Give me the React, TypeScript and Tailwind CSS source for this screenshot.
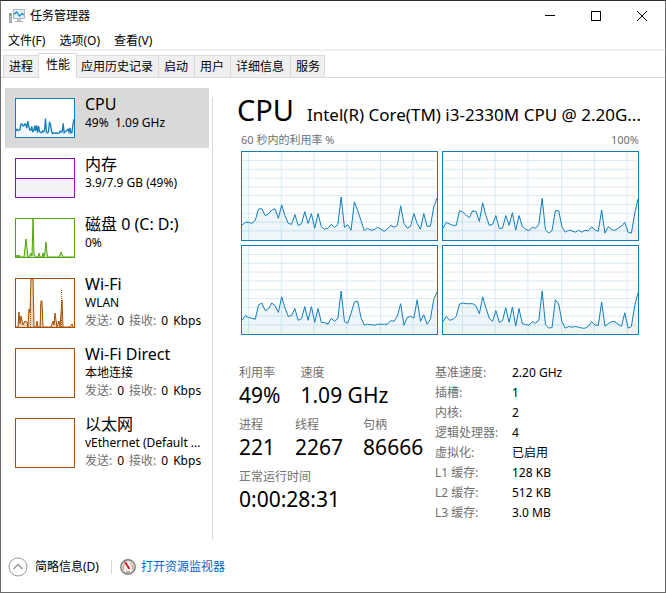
import React from 'react';

// One sample per second, 0..270 for each logical processor
const CORES: number[][] = [
  [46, 54, 54, 51, 60, 95, 96, 75, 80, 92, 96, 66, 108, 75, 51, 48, 78, 45, 50, 87, 51, 81, 36, 81, 41, 33, 36, 48, 39, 48, 132, 39, 47, 30, 117, 91, 60, 29, 36, 30, 32, 39, 33, 27, 34, 45, 39, 45, 105, 51, 36, 42, 81, 51, 33, 81, 42, 42, 101, 128],
  [36, 54, 49, 45, 45, 90, 86, 76, 69, 90, 87, 57, 114, 75, 45, 48, 75, 36, 36, 75, 45, 84, 30, 75, 42, 33, 29, 39, 36, 48, 128, 32, 21, 29, 90, 90, 41, 24, 30, 28, 24, 30, 24, 30, 28, 41, 30, 27, 92, 21, 41, 32, 30, 36, 43, 54, 24, 21, 81, 126],
  [42, 56, 51, 48, 45, 89, 95, 72, 77, 95, 87, 66, 114, 80, 54, 57, 78, 42, 47, 84, 42, 84, 36, 78, 36, 35, 30, 48, 39, 48, 132, 38, 33, 64, 98, 101, 50, 27, 30, 29, 27, 30, 30, 30, 30, 41, 39, 55, 93, 27, 51, 54, 49, 105, 39, 59, 30, 45, 106, 129],
  [38, 54, 42, 45, 54, 92, 95, 93, 93, 93, 86, 62, 114, 80, 48, 39, 72, 36, 41, 81, 36, 83, 24, 78, 32, 29, 27, 38, 33, 42, 132, 29, 18, 20, 105, 92, 38, 18, 23, 21, 23, 21, 18, 18, 24, 38, 27, 27, 98, 24, 32, 38, 38, 30, 24, 65, 18, 23, 87, 126],
];

const GRID_X = [
  [21, 120, 219, 318, 420, 519],
  [60, 159, 258, 360, 459, 558],
];
const GRID_Y = [27, 54, 81, 108, 135, 162, 189, 216, 243];

const toPoints = (samples: number[]) => samples.map((v, i) => `${i * 10},${270 - v}`).join(' ');

const CoreChart: React.FC<{ samples: number[]; gridX: number[] }> = ({ samples, gridX }) => {
  const points = toPoints(samples);
  return (
    <div className="h-[90px] border border-[#117dbb] bg-white">
      <svg className="block h-full w-full" viewBox="0 0 590 270" preserveAspectRatio="none">
        <g stroke="#d9eaf4" strokeWidth="3">
          {GRID_Y.map((y) => <line key={y} x1="0" y1={y - 1} x2="584" y2={y - 1} />)}
          {gridX.map((x) => <line key={x} x1={x - 1} y1="0" x2={x - 1} y2="270" />)}
        </g>
        <polygon points={`0,270 ${points} 590,270`} fill="#117dbb" fillOpacity="0.07" />
        <polyline points={points} fill="none" stroke="#117dbb" strokeWidth="1" vectorEffect="non-scaling-stroke" />
      </svg>
    </div>
  );
};

const CpuThumb = () => {
  const total = CORES[0].map((_, i) => CORES.reduce((sum, core) => sum + core[i], 0) / CORES.length);
  const points = toPoints(total);
  return (
    <svg className="block h-full w-full" viewBox="0 0 590 270" preserveAspectRatio="none">
      <polygon points={`0,270 ${points} 590,270`} fill="#f1f6fa" />
      <polyline points={points} fill="none" stroke="#117dbb" strokeWidth="1.3" vectorEffect="non-scaling-stroke" />
    </svg>
  );
};

const MemoryThumb = () => (
  <svg className="block h-full w-full" viewBox="0 0 58 38">
    <rect x="0" y="20" width="58" height="18" fill="#f4f2f4" />
    <line x1="0" y1="19.5" x2="58" y2="19.5" stroke="#8b12ae" />
  </svg>
);

const DiskThumb = () => (
  <svg className="block h-full w-full" viewBox="0 0 58 38">
    <polyline
      points="0,38 1,36 2,38 3,36 4,38 8,38 10,20 12,38 13,38 15,34 16,37 17,0 18,35 20,38 22,38 23,34 24,38 26,38 27,34 28,38 29,32 30,23 31,35 32,38 43,38 45,33 47,38 58,38"
      fill="#4da60c"
      fillOpacity="0.3"
      stroke="#4da60c"
    />
  </svg>
);

const WifiThumb = () => (
  <svg className="block h-full w-full" viewBox="0 0 58 48">
    <polyline
      points="0,48 2,48 3,33 4,45 5,37 7,46 9,42 11,43 12,48 13,30 14,34 15,0 17,0 18,48 20,48 21,42 22,48 24,48 25,22 26,22 27,48 35,48 37,42 38,46 39,34 41,48 43,42 44,48 46,21 47,48 54,48 56,45 57,48"
      fill="#a74f01"
      fillOpacity="0.25"
      stroke="#a74f01"
    />
    <path d="M14.5 48V20M24.5 48V24M45.5 48V10" fill="none" stroke="#a74f01" strokeDasharray="1 1" />
  </svg>
);

interface Resource {
  name: string;
  detail: string;
  network?: boolean;
  frame: string;
  thumb?: React.ReactNode;
}

const RESOURCES: Resource[] = [
  { name: 'CPU', detail: '49%  1.09 GHz', frame: 'h-10 border-[#117dbb]', thumb: <CpuThumb /> },
  { name: '内存', detail: '3.9/7.9 GB (49%)', frame: 'h-10 border-[#8b12ae]', thumb: <MemoryThumb /> },
  { name: '磁盘 0 (C: D:)', detail: '0%', frame: 'h-10 border-[#4da60c]', thumb: <DiskThumb /> },
  { name: 'Wi-Fi', detail: 'WLAN', network: true, frame: 'h-[50px] border-[#a74f01]', thumb: <WifiThumb /> },
  { name: 'Wi-Fi Direct', detail: '本地连接', network: true, frame: 'h-[50px] border-[#a74f01]' },
  { name: '以太网', detail: 'vEthernet (Default ...', network: true, frame: 'h-[50px] border-[#a74f01]' },
];

const TABS = [
  { label: '进程', shape: 'h-[22px] border-t border-l bg-[#f0f0f0] px-[5px]' },
  { label: '性能', shape: '-mb-px h-[25px] border border-b-0 bg-white pr-[6px] pb-[2px] pl-[7px]' },
  { label: '应用历史记录', shape: 'h-[22px] border-t border-r bg-[#f0f0f0] pr-[5px] pl-1' },
  { label: '启动', shape: 'h-[22px] border-t border-r bg-[#f0f0f0] pr-[6px] pl-[5px]' },
  { label: '用户', shape: 'h-[22px] border-t border-r bg-[#f0f0f0] pr-[6px] pl-[5px]' },
  { label: '详细信息', shape: 'h-[22px] border-t border-r bg-[#f0f0f0] pr-[6px] pl-[5px]' },
  { label: '服务', shape: 'h-[22px] border-t border-r bg-[#f0f0f0] pr-1 pl-[5px]' },
];

const SPECS = [
  ['基准速度:', '2.20 GHz'],
  ['插槽:', '1'],
  ['内核:', '2'],
  ['逻辑处理器:', '4'],
  ['虚拟化:', '已启用'],
  ['L1 缓存:', '128 KB'],
  ['L2 缓存:', '512 KB'],
  ['L3 缓存:', '3.0 MB'],
];

const Stat: React.FC<{ label: string; value: string }> = ({ label, value }) => (
  <div>
    <dt className="text-[#707070]">{label}</dt>
    <dd className="text-[21px] leading-7">{value}</dd>
  </div>
);

const AppIcon = () => (
  <svg width="16" height="16" viewBox="0 0 16 16">
    <rect x="0.5" y="5.5" width="2" height="9" fill="#c3c7ca" stroke="#9da1a4" />
    <rect x="1" y="6" width="1" height="2" fill="#49b04a" />
    <rect x="4" y="1" width="12" height="10" fill="#b4b8bb" />
    <rect x="5" y="2" width="10" height="8" fill="#d8f2fc" />
    <polyline points="5,6.5 7.5,4 10.5,8 13,5.5 15,7" fill="none" stroke="#1a86bd" strokeWidth="1.2" />
    <rect x="8" y="11" width="4" height="2" fill="#c3c7ca" />
    <rect x="6" y="13" width="8" height="1" fill="#a9adb0" />
  </svg>
);

const GaugeIcon = () => (
  <svg width="16" height="16" viewBox="0 0 16 16">
    <circle cx="8" cy="8" r="7.2" fill="#f5f3f0" stroke="#777" strokeWidth="1.4" />
    <circle cx="8" cy="8" r="5.7" fill="none" stroke="#c9c5bf" strokeWidth="0.7" />
    <path d="M4 10.5A4.5 4.5 0 0 1 4.6 5M10 4.2A4.5 4.5 0 0 1 12 10.5" fill="none" stroke="#c88b5c" />
    <path d="M4.2 3.2L6 2.8L10.2 9.5L8.5 10.2Z" fill="#d3131b" />
    <path d="M6 13H10" stroke="#777" />
  </svg>
);

const CaptionButton: React.FC<{ label: string; children: React.ReactNode }> = ({ label, children }) => (
  <button aria-label={label} className="flex h-full w-[46px] items-center justify-center">
    <svg width="10" height="10" viewBox="0 0 10 10" fill="none" stroke="#000">
      {children}
    </svg>
  </button>
);

export default function App() {
  return (
    <div className="flex min-h-screen flex-col border border-[#6b6b6b] border-t-[#2d2d30] bg-white font-['Noto_Sans','Noto_Sans_CJK_SC',sans-serif] text-[12px] leading-4 text-black">
      <header className="flex h-[30px] items-center pl-2">
        <AppIcon />
        <h1 className="ml-[5px] flex-1">任务管理器</h1>
        <CaptionButton label="最小化"><path d="M0 4.5H10" /></CaptionButton>
        <CaptionButton label="最大化"><rect x="0.5" y="0.5" width="9" height="9" /></CaptionButton>
        <CaptionButton label="关闭"><path d="M0 0L10 10M10 0L0 10" /></CaptionButton>
      </header>

      <nav className="flex h-5 items-center gap-[14px] border-b-2 border-[#f0f0f0] pt-[2px] pl-[7px]">
        <button>文件(F)</button>
        <button>选项(O)</button>
        <button>查看(V)</button>
      </nav>

      <div role="tablist" className="flex h-[27px] items-end border-b border-[#d9d9d9] pl-[2px]">
        {TABS.map(({ label, shape }) => (
          <button key={label} role="tab" aria-selected={label === '性能'} className={`border-[#d9d9d9] ${shape}`}>
            {label}
          </button>
        ))}
      </div>

      <div className="flex flex-1 pt-[10px]">
        <aside className="w-52 shrink-0 pl-1">
          {RESOURCES.map((item, i) => (
            <button key={item.name} className={`flex w-full gap-[10px] px-[10px] pb-[10px] text-left ${i === 0 ? 'bg-[#d9d9d9]' : ''}`}>
              <span className={`mt-[10px] w-[60px] shrink-0 border bg-white ${item.frame}`}>{item.thumb}</span>
              <span className="flex flex-col pt-[6px] whitespace-pre">
                <span className="text-[16px] leading-5">{item.name}</span>
                <span className="-mb-2 leading-[18px]">{item.detail}</span>
                {item.network && (
                  <span className="mt-2 -mb-2 flex gap-[5px] leading-[18px]">
                    <span className="text-[#707070]">发送:</span>
                    <span>0</span>
                    <span className="text-[#707070]">接收:</span>
                    <span>0</span>
                    <span>Kbps</span>
                  </span>
                )}
              </span>
            </button>
          ))}
        </aside>

        <main className="mt-[10px] ml-[3px] min-w-0 flex-1 border-l border-[#d9d9d9] pr-6 pl-6">
          <div className="flex items-baseline gap-3">
            <h2 className="text-[29px] leading-6">CPU</h2>
            <p className="flex-1 text-right text-[17px] leading-6 whitespace-nowrap">Intel(R) Core(TM) i3-2330M CPU @ 2.20G...</p>
          </div>
          <div className="pr-[2px] pl-1">
            <div className="flex justify-between pt-[5px] pb-[3px] text-[11px] text-[#707070]">
              <span>60 秒内的利用率 %</span>
              <span>100%</span>
            </div>
            <div className="grid grid-cols-2 gap-1">
              {CORES.map((samples, i) => (
                <CoreChart key={i} samples={samples} gridX={GRID_X[i % 2]} />
              ))}
            </div>
          </div>

          <div className="flex gap-3 pt-[30px] pl-[2px]">
            <dl className="w-[184px] space-y-2 whitespace-nowrap">
              <div className="flex gap-5">
                <Stat label="利用率" value="49%" />
                <Stat label="速度" value="1.09 GHz" />
              </div>
              <div className="flex gap-5">
                <Stat label="进程" value="221" />
                <Stat label="线程" value="2267" />
                <Stat label="句柄" value="86666" />
              </div>
              <Stat label="正常运行时间" value="0:00:28:31" />
            </dl>
            <table className="self-start text-left whitespace-nowrap">
              <tbody>
                {SPECS.map(([label, value]) => (
                  <tr key={label} className="h-5">
                    <th className="w-[77px] p-0 pb-1 font-normal text-[#707070]">{label}</th>
                    <td className="p-0 pb-1">{value}</td>
                  </tr>
                ))}
              </tbody>
            </table>
          </div>
        </main>
      </div>

      <footer className="flex h-[52px] items-center pt-[2px] pl-[7px]">
        <button className="flex items-center gap-[7px]">
          <svg width="20" height="20" viewBox="0 0 20 20" fill="none">
            <circle cx="10" cy="10" r="9" stroke="#999" />
            <path d="M5.5 12L10 7.5L14.5 12" stroke="#999" strokeWidth="1.5" />
          </svg>
          简略信息(D)
        </button>
        <span className="mr-2 ml-3 h-[14px] w-px bg-[#d9d9d9]" />
        <GaugeIcon />
        <a href="#resmon" className="ml-[5px] text-[#0066cc]">打开资源监视器</a>
      </footer>
    </div>
  );
}
